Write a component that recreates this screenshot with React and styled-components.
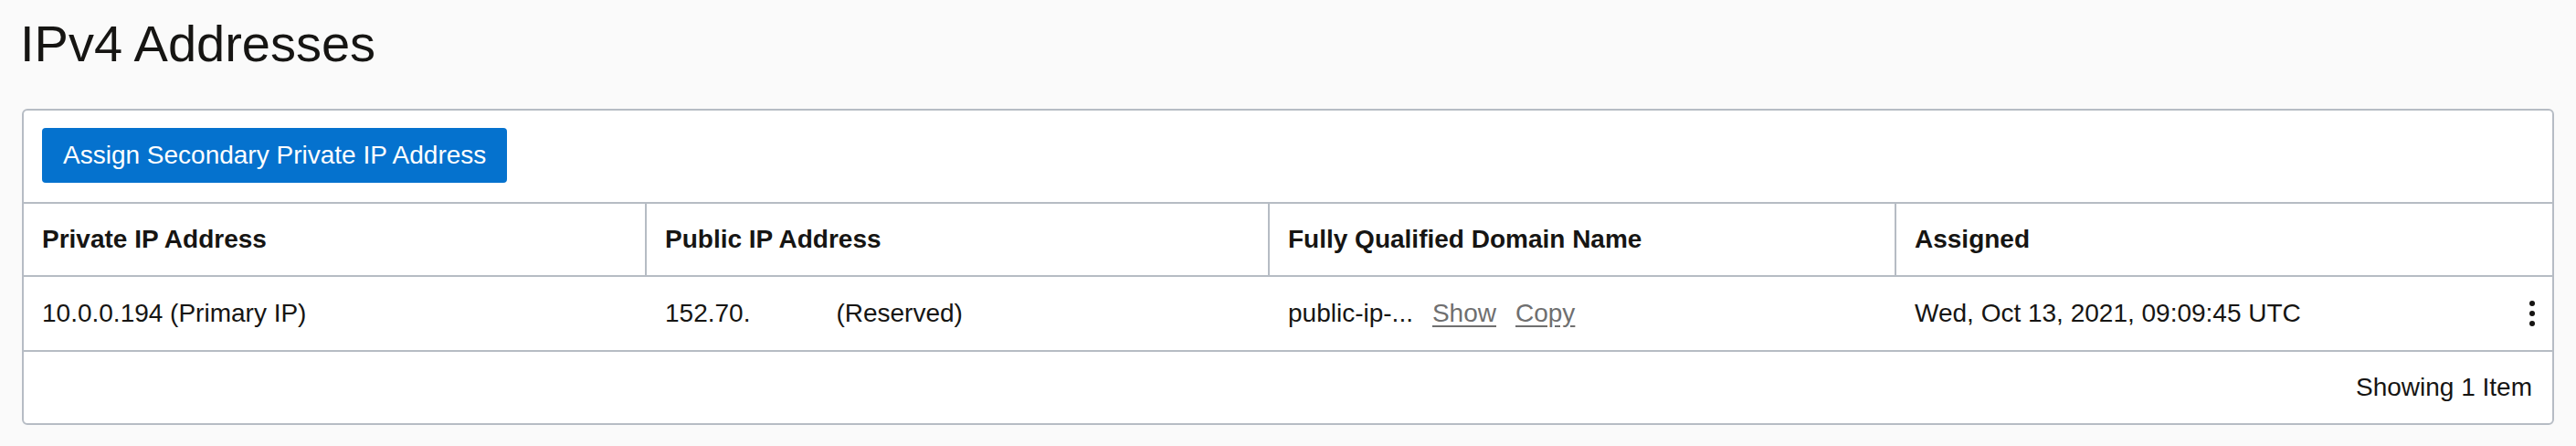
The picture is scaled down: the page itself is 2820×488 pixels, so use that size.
import styled, { createGlobalStyle } from 'styled-components'

const GlobalStyle = createGlobalStyle`
  body {
    margin: 0;
    background: #fafafa;
    font-family: "Liberation Sans", Arial, Helvetica, sans-serif;
    color: #161513;
  }
`

const columns = [
  { key: 'private', label: 'Private IP Address' },
  { key: 'public', label: 'Public IP Address' },
  { key: 'fqdn', label: 'Fully Qualified Domain Name' },
  { key: 'assigned', label: 'Assigned' },
]

function App() {
  return (
    <Page>
      <GlobalStyle />
      <Title>IPv4 Addresses</Title>
      <Panel>
        <Toolbar>
          <PrimaryButton>Assign Secondary Private IP Address</PrimaryButton>
        </Toolbar>
        <Table>
          {columns.map((col, i) => (
            <HeadCell key={col.key} $last={i === columns.length - 1}>{col.label}</HeadCell>
          ))}
          <Cell>10.0.0.194 (Primary IP)</Cell>
          <Cell>
            152.70.<Redacted />(Reserved)
          </Cell>
          <Cell>
            public-ip-...
            <TextLink>Show</TextLink>
            <TextLink>Copy</TextLink>
          </Cell>
          <Cell $split>
            Wed, Oct 13, 2021, 09:09:45 UTC
            <Kebab aria-label="Actions">
              <svg width="6" height="28" viewBox="0 0 6 28">
                <circle cx="3" cy="3" r="3" fill="#161513" />
                <circle cx="3" cy="14" r="3" fill="#161513" />
                <circle cx="3" cy="25" r="3" fill="#161513" />
              </svg>
            </Kebab>
          </Cell>
        </Table>
        <Footer>Showing 1 Item</Footer>
      </Panel>
    </Page>
  )
}

export default App

const Page = styled.div`
  padding: 8px 24px 24px;
`

const Title = styled.h1`
  margin: 0 0 31px -2px;
  font-size: 56px;
  font-weight: 400;
  line-height: 80px;
  color: #161513;
`

const Panel = styled.section`
  background: #fff;
  border: 2px solid #b6bcc4;
  border-radius: 6px;
  overflow: hidden;
`

const Toolbar = styled.div`
  display: flex;
  align-items: center;
  padding: 19px 20px 21px;
  border-bottom: 2px solid #b6bcc4;
`

const PrimaryButton = styled.button`
  height: 60px;
  padding: 0 23px;
  border: none;
  border-radius: 4px;
  background: #0572ce;
  color: #fff;
  font-family: inherit;
  font-size: 28px;
  cursor: pointer;
`

const Table = styled.div`
  display: grid;
  grid-template-columns: 682px 682px 686px 1fr;
`

const HeadCell = styled.div`
  display: flex;
  align-items: center;
  height: 78px;
  padding: 0 20px;
  font-size: 28px;
  font-weight: 700;
  border-bottom: 2px solid #b6bcc4;
  border-right: ${(p) => (p.$last ? 'none' : '2px solid #b6bcc4')};
`

const Cell = styled.div`
  display: flex;
  align-items: center;
  justify-content: ${(p) => (p.$split ? 'space-between' : 'flex-start')};
  height: 80px;
  padding: 0 19px 0 20px;
  font-size: 28px;
  white-space: nowrap;
  border-bottom: 2px solid #b6bcc4;
`

const Redacted = styled.span`
  display: inline-block;
  width: 94px;
`

const TextLink = styled.a`
  margin-left: 21px;
  color: #6f6f6f;
  text-decoration: underline;
  text-underline-offset: 4px;
  cursor: pointer;
`

const Kebab = styled.button`
  display: flex;
  padding: 0;
  border: none;
  background: none;
  cursor: pointer;
`

const Footer = styled.div`
  display: flex;
  align-items: center;
  justify-content: flex-end;
  height: 78px;
  padding: 0 22px;
  font-size: 28px;
`
